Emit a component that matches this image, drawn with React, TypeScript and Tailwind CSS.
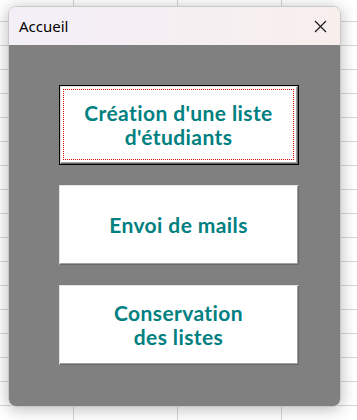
import type { ReactNode } from "react";

const face = { fontFamily: '"Lato", "Liberation Sans", sans-serif' };

function FormButton({ children, focused }: { children: ReactNode; focused?: boolean }) {
  const bevel = (
    <div className="h-full border-t border-l border-t-[#e3e3e3] border-l-[#e3e3e3] border-r border-b border-r-[#696969] border-b-[#696969] bg-white">
      <div className="h-full border-r border-b border-r-[#a0a0a0] border-b-[#a0a0a0] p-[2px]">
        <div
          className={
            "flex h-full items-center justify-center text-center text-[21px] leading-[24px] font-bold tracking-[0.4px] text-[#008080] " +
            (focused ? "border border-dotted border-[#e00000]" : "")
          }
          style={face}
        >
          {children}
        </div>
      </div>
    </div>
  );

  return (
    <div className="ml-[50px] h-[80px] w-[240px]">
      {focused ? <div className="h-full border border-black">{bevel}</div> : bevel}
    </div>
  );
}

export default function App() {
  return (
    <div className="h-[420px] w-full overflow-hidden bg-white bg-[linear-gradient(#d6d6d6_1px,transparent_1px),linear-gradient(90deg,#d6d6d6_1px,transparent_1px)] bg-size-[104px_24px] bg-position-[73px_21px] pt-[6px] pl-[8px]">
      <div className="flex h-[401px] w-[333px] flex-col overflow-hidden rounded-lg border border-[#c8c8c8] shadow-[0_2px_16px_rgba(0,0,0,0.28)]">
        {/* title bar */}
        <div className="flex h-[38px] shrink-0 items-center justify-between bg-linear-to-r from-[#f3eff8] to-[#f8efed] pr-[13px] pl-[10px]">
          <span className="text-[15px] text-black" style={{ fontFamily: '"Noto Sans", "Open Sans", sans-serif' }}>
            Accueil
          </span>
          <svg width="13" height="13" viewBox="0 0 13 13">
            <path d="M1 1 L12 12 M12 1 L1 12" stroke="#1a1a1a" strokeWidth="1.2" fill="none" />
          </svg>
        </div>

        {/* form body */}
        <div className="flex flex-1 flex-col gap-[20px] bg-[#808080] pt-[40px]">
          <FormButton focused>
            Création d'une liste
            <br />
            d'étudiants
          </FormButton>
          <FormButton>Envoi de mails</FormButton>
          <FormButton>
            Conservation
            <br />
            des listes
          </FormButton>
        </div>
      </div>
    </div>
  );
}
